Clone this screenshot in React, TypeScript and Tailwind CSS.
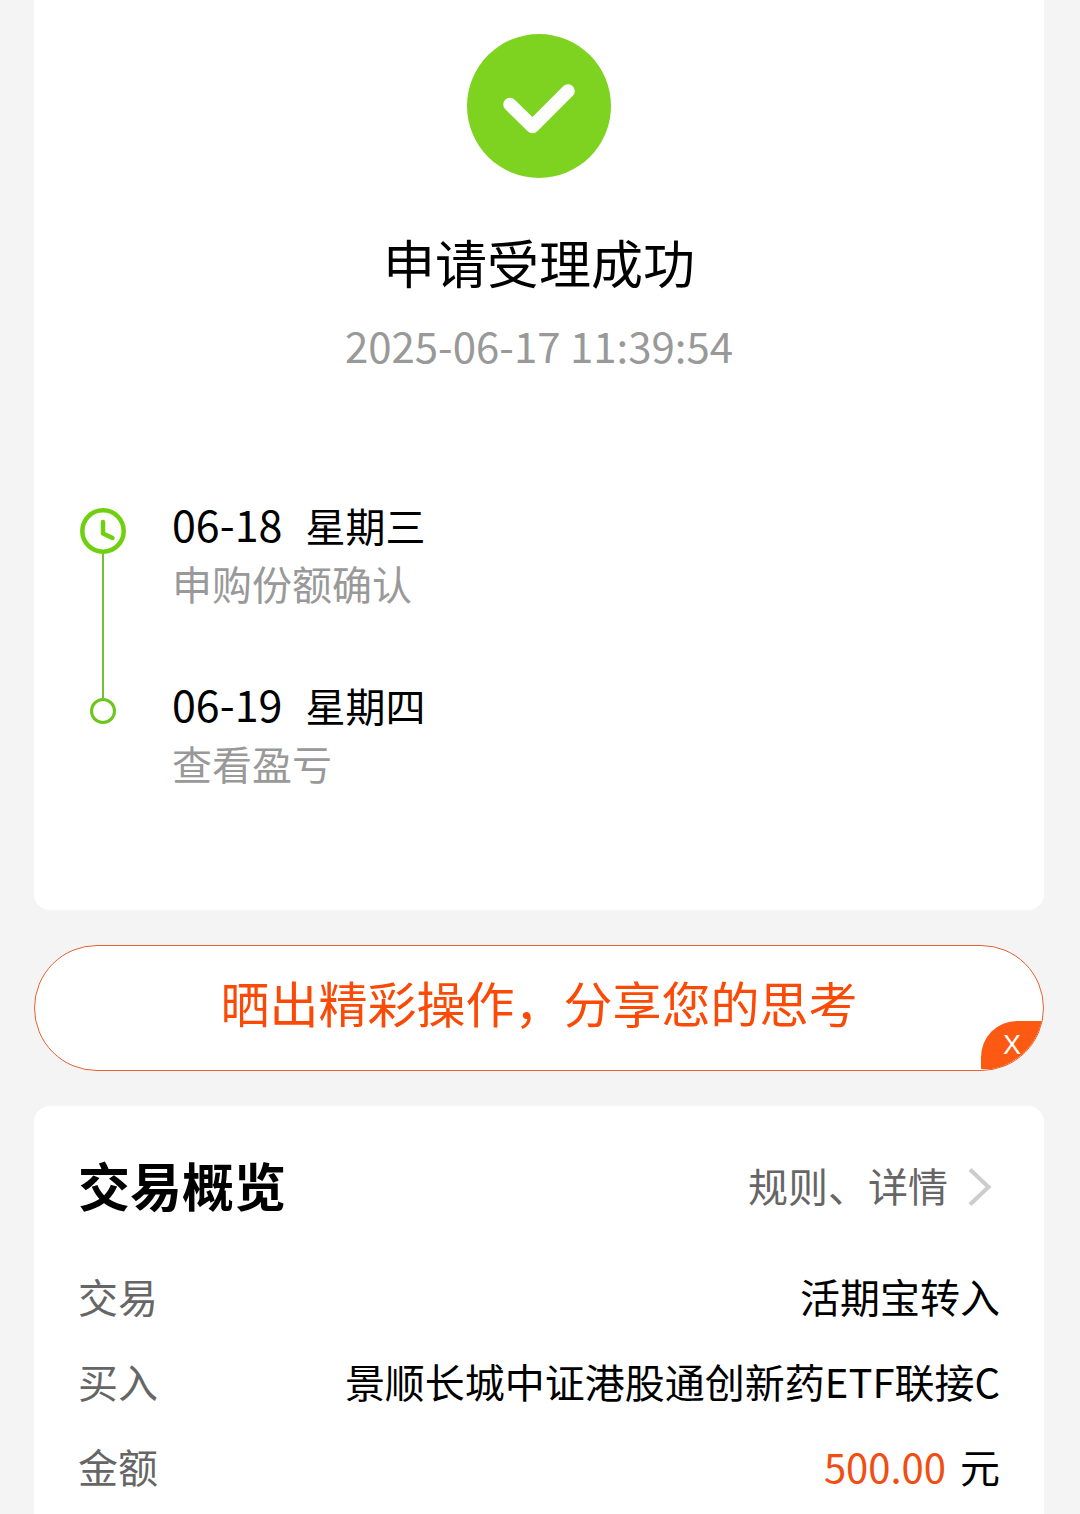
import React from "react";

const FONT = "font-['Noto_Sans_CJK_SC',sans-serif]";

interface Step {
  date: string;
  weekday: string;
  label: string;
}

const STEPS: Step[] = [
  { date: "06-18", weekday: "星期三", label: "申购份额确认" },
  { date: "06-19", weekday: "星期四", label: "查看盈亏" },
];

function SuccessIcon() {
  return (
    <svg viewBox="0 0 144 144" className="size-36" aria-hidden="true">
      <circle cx="72" cy="72" r="72" fill="#7ed321" />
      <path
        d="M43 70.500 65.500 92.500 101 57"
        fill="none"
        stroke="#fff"
        strokeWidth="13.500"
        strokeLinecap="round"
        strokeLinejoin="round"
      />
    </svg>
  );
}

function ClockIcon() {
  return (
    <svg
      viewBox="0 0 46 46"
      className="size-[46px] shrink-0"
      fill="none"
      stroke="#70d010"
      strokeWidth="4.500"
      strokeLinecap="round"
      strokeLinejoin="round"
      aria-hidden="true"
    >
      <circle cx="23" cy="23" r="20.700" />
      <path d="M23 14v11.500l9.500 4.500" />
    </svg>
  );
}

function TimelineItem({ step, first }: { step: Step; first: boolean }) {
  return (
    <li className="flex gap-11">
      <div className="flex w-[50px] shrink-0 flex-col items-center">
        {first ? (
          <>
            <div className="h-[15px]" />
            <ClockIcon />
            <div className="w-[2px] flex-1 bg-[#72bf38]" />
          </>
        ) : (
          <>
            <div className="h-[25px] w-[2px] bg-[#72bf38]" />
            <div className="size-[26px] rounded-full border-[3px] border-[#6cc61c]" />
          </>
        )}
      </div>
      <div className={first ? "pb-[60px]" : ""}>
        <p className="flex h-[60px] items-baseline gap-[23px] text-[40px] leading-[60px] text-black">
          <span className="text-[43px]">{step.date}</span>
          <span>{step.weekday}</span>
        </p>
        <p className="text-[40px] leading-[60px] text-[#999]">{step.label}</p>
      </div>
    </li>
  );
}

function ShareBanner() {
  return (
    <div className="relative my-[35px] h-[126px] overflow-hidden rounded-full border border-[#e8602c] bg-white">
      <button
        type="button"
        className="h-full w-full pb-3 text-center text-[49px] leading-[64px] text-[#fb4a05]"
      >
        晒出精彩操作，分享您的思考
      </button>
      <button
        type="button"
        aria-label="关闭"
        className="absolute right-0 bottom-px h-12 w-[62px] rounded-tl-[36px] bg-[#fc5a12] text-center font-['Liberation_Sans',sans-serif] text-[27px] leading-[48px] text-white"
      >
        X
      </button>
    </div>
  );
}

function Row({ label, children }: { label: string; children: React.ReactNode }) {
  return (
    <div className="flex h-[85px] items-center justify-between text-[40px] leading-[60px]">
      <dt className="text-[#666]">{label}</dt>
      <dd className="text-black">{children}</dd>
    </div>
  );
}

export default function App() {
  return (
    <main className={`${FONT} flex min-h-screen flex-col bg-[#f4f4f4] pr-9 pl-[34px]`}>
      <section className="rounded-b-2xl bg-white px-11 pt-[34px] pb-[117px]">
        <div className="flex flex-col items-center">
          <SuccessIcon />
          <h1 className="mt-[52px] text-[52px] leading-[64px] text-black">申请受理成功</h1>
          <time
            dateTime="2025-06-17T11:39:54"
            className="mt-[27px] text-[42px] leading-[48px] text-[#999]"
          >
            2025-06-17 11:39:54
          </time>
        </div>
        <ol className="mt-[124px]">
          {STEPS.map((step, i) => (
            <TimelineItem key={step.date} step={step} first={i === 0} />
          ))}
        </ol>
      </section>

      <ShareBanner />

      <section className="flex-1 rounded-t-2xl bg-white px-11 pt-[39px]">
        <div className="flex h-20 items-center justify-between">
          <h2 className="text-[52px] leading-[80px] font-bold text-black">交易概览</h2>
          <a href="#detail" className="flex items-center gap-5 text-[40px] leading-[60px] text-[#666]">
            规则、详情
            <svg
              viewBox="0 0 32 40"
              className="mt-1 h-10 w-8"
              fill="none"
              stroke="#ccc"
              strokeWidth="4"
              aria-hidden="true"
            >
              <path d="M2 2.500 20.500 20 2 37.500" />
            </svg>
          </a>
        </div>
        <dl className="mt-7">
          <Row label="交易">活期宝转入</Row>
          <Row label="买入">景顺长城中证港股通创新药ETF联接C</Row>
          <Row label="金额">
            <span className="mr-[14px] text-[#f04e12]">500.00</span>元
          </Row>
        </dl>
      </section>
    </main>
  );
}
